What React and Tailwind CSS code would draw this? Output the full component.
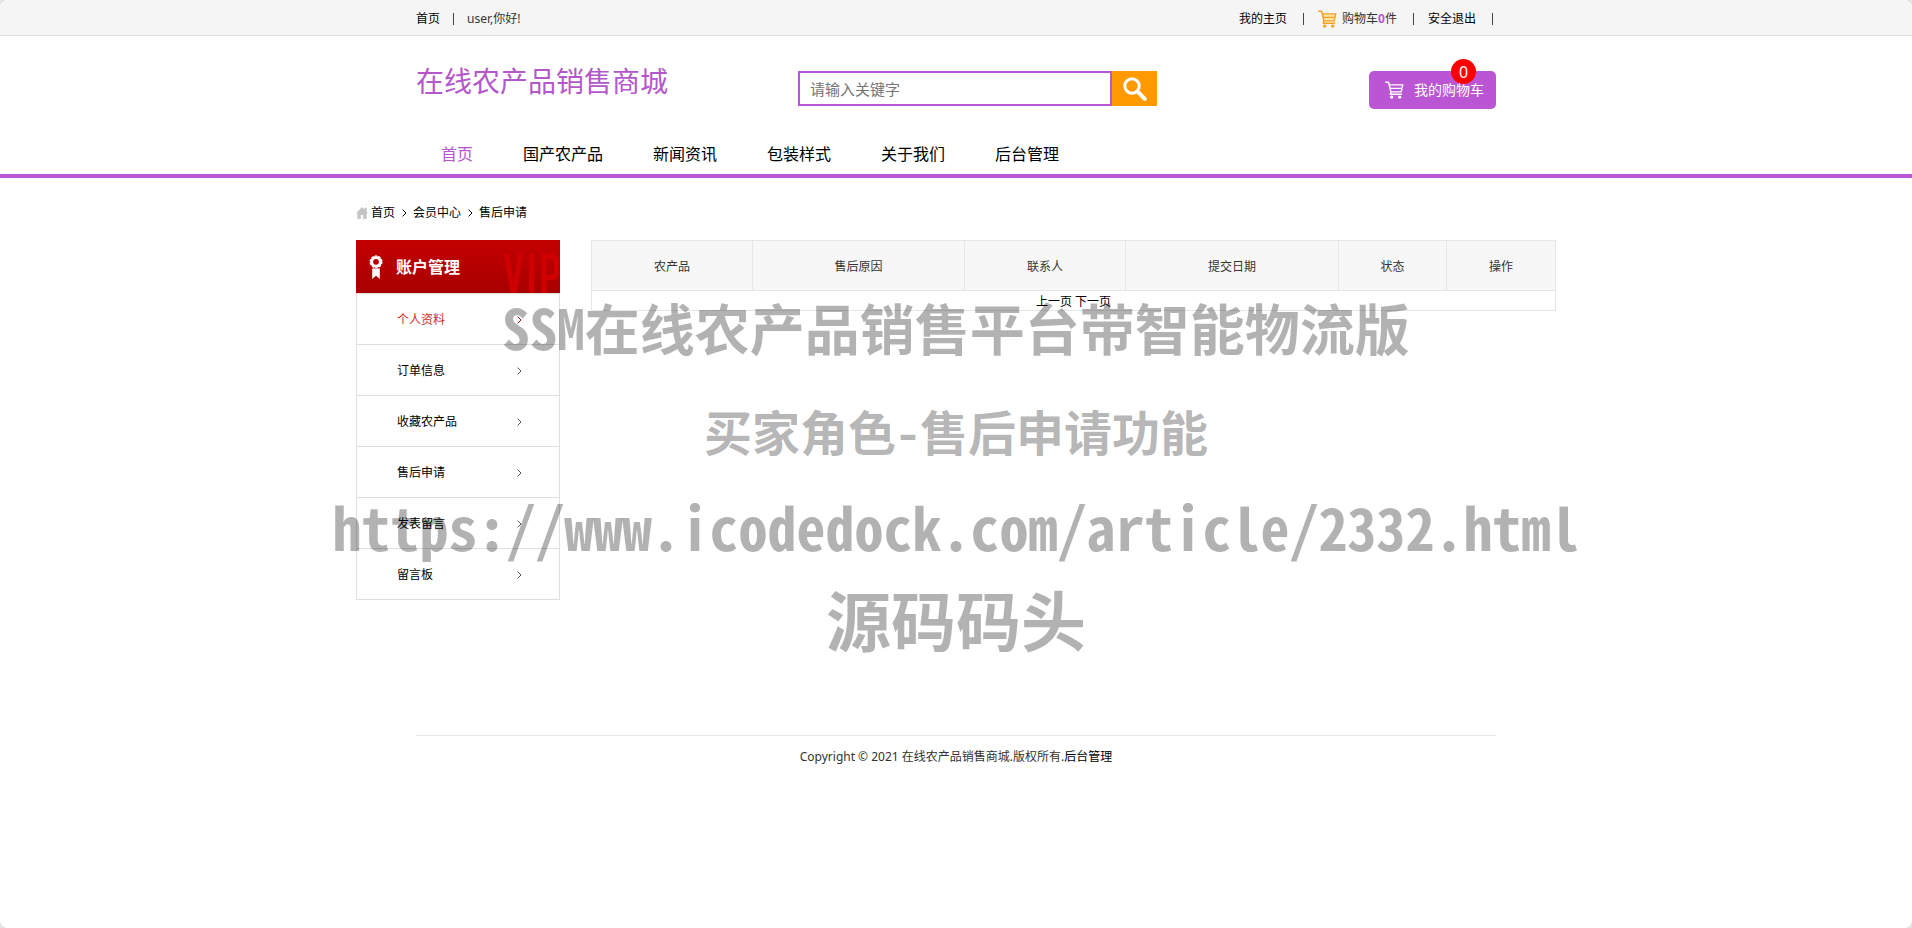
const navItems = ['首页', '国产农产品', '新闻资讯', '包装样式', '关于我们', '后台管理'];
const sideItems = ['个人资料', '订单信息', '收藏农产品', '售后申请', '发表留言', '留言板'];
const columns = [
  ['农产品', 'w-[161px]'],
  ['售后原因', 'w-[212px]'],
  ['联系人', 'w-[161px]'],
  ['提交日期', 'w-[213px]'],
  ['状态', 'w-[108px]'],
  ['操作', 'w-[109px]'],
];

function CartIcon({ className, shade = 'none' }) {
  return (
    <svg viewBox="0 0 20 19" fill="none" stroke="currentColor" className={className} aria-hidden="true">
      <path d="M4.5 4h14l-1.5 8H6.500z" fill={shade} stroke="none" />
      <path d="M.8 1.300h3L6.300 12l-.8 2h12" strokeWidth="1.500" strokeLinecap="round" strokeLinejoin="round" />
      <path d="M4.500 4h14.300L17 11.500H6.300M5.300 7.800H17.500" strokeWidth="1.400" strokeLinejoin="round" />
      <circle cx="7" cy="17" r="1.800" fill="currentColor" stroke="none" />
      <circle cx="15.500" cy="17" r="1.800" fill="currentColor" stroke="none" />
    </svg>
  );
}

function Chevron({ className }) {
  return (
    <svg viewBox="0 0 5 8" fill="none" stroke="currentColor" className={className} aria-hidden="true">
      <path d="M.6.6 4 4 .6 7.400" strokeWidth="1" />
    </svg>
  );
}

function HomeIcon() {
  return (
    <svg viewBox="0 0 12 12" fill="#c4c4c4" className="mr-[3px] size-3" aria-hidden="true">
      <path d="M6 0 0 6.200h1.400V12h3.400V8h2.400v4h3.400V6.200H12L10.800 5V.8H8.500v1.800z" />
    </svg>
  );
}

function MedalIcon() {
  return (
    <svg viewBox="0 0 14 24" fill="none" className="h-6 w-3.5" aria-hidden="true">
      <circle cx="7" cy="6.800" r="4.400" stroke="#fff" strokeWidth="3" />
      <circle cx="7" cy="6.800" r="5.900" stroke="#fff" strokeWidth="1.200" strokeDasharray="2.300 1.400" />
      <path d="M3.200 13.500h7.600V24L7 20.800 3.200 24z" fill="#fff" />
    </svg>
  );
}

function VipMark() {
  return (
    <svg viewBox="0 0 56 39" fill="none" stroke="#d00000" strokeWidth="5" className="absolute right-0 bottom-0 h-[39px] w-14" aria-hidden="true">
      <path d="M2.500 0 9 39M16.500 0 10 39M27.500 0v39M40 39V2.500h7.500q5 0 5 6v9q0 6-5 6H40" />
    </svg>
  );
}

function TopBar() {
  return (
    <div className="border-b border-[#dcdcdc] bg-[#f5f5f5]">
      <div className="mx-auto flex h-[35px] w-full max-w-[1080px] items-center justify-between pt-[3px]">
        <div className="flex items-center">
          <a href="#" className="text-black">首页</a>
          <span className="mx-[13px] h-3 w-px bg-[#444]" />
          <span>user,你好!</span>
        </div>
        <div className="flex items-center">
          <a href="#" className="text-black">我的主页</a>
          <span className="mx-4 mr-[14px] h-3 w-px bg-[#444]" />
          <a href="#" className="flex items-center gap-[5px]">
            <CartIcon className="h-[18px] w-[19px] text-[#f5a023]" shade="#fbe3a4" />
            <span>购物车<b className="text-[#ba55d3]">0</b>件</span>
          </a>
          <span className="ml-4 mr-[14px] h-3 w-px bg-[#444]" />
          <a href="#" className="text-black">安全退出</a>
          <span className="ml-4 mr-[3px] h-3 w-px bg-[#444]" />
        </div>
      </div>
    </div>
  );
}

function Header() {
  return (
    <header className="border-b-4 border-[#ba55d3]">
      <div className="mx-auto w-full max-w-[1080px]">
        <div className="flex items-start pt-[35px]">
          <h1 className="-mt-2.5 w-[382px] text-[28px] leading-10 text-[#b457cc]">在线农产品销售商城</h1>
          <form className="flex h-[35px]" onSubmit={(e) => e.preventDefault()}>
            <input
              type="text"
              aria-label="关键字"
              placeholder="请输入关键字"
              className="w-[314px] border-2 border-[#ba55d3] bg-white px-2.5 text-[15px] outline-none placeholder:text-[#757575]"
            />
            <button type="submit" aria-label="搜索" className="flex w-[45px] items-center justify-center bg-[#ff9900]">
              <svg viewBox="0 0 24 24" fill="none" stroke="#fff" className="size-6" aria-hidden="true">
                <circle cx="9" cy="9" r="7.200" strokeWidth="3" />
                <path d="m14.500 14.500 7.300 7.300" strokeWidth="4" strokeLinecap="round" />
              </svg>
            </button>
          </form>
          <a href="#" className="relative ml-auto flex h-[38px] w-[127px] items-center gap-2.5 rounded-[5px] bg-[#ba55d3] pl-4 text-sm text-white">
            <CartIcon className="h-[18px] w-[19px]" />
            我的购物车
            <span className="absolute -top-3 right-5 flex size-[25px] items-center justify-center rounded-full bg-[#ff0000] text-base">0</span>
          </a>
        </div>
        <nav className="flex h-[65px] items-end pb-1">
          {navItems.map((item, i) => (
            <a key={item} href="#" className={i === 0 ? 'px-[25px] text-base leading-8 text-[#b457cc]' : 'px-[25px] text-base leading-8 text-black'}>
              {item}
            </a>
          ))}
        </nav>
      </div>
    </header>
  );
}

function Sidebar() {
  return (
    <aside className="w-[204px] shrink-0">
      <h2 className="relative flex h-[53px] items-center gap-[13px] overflow-hidden bg-linear-to-b from-[#c40000] to-[#a80000] pl-[13px] text-base font-bold text-white">
        <VipMark />
        <MedalIcon />
        <span className="relative">账户管理</span>
      </h2>
      <ul className="border-x border-t border-[#dfdfdf]">
        {sideItems.map((item, i) => (
          <li key={item} className="border-b border-[#dfdfdf]">
            <a
              href="#"
              className={
                i === 0
                  ? 'flex h-[50px] items-center justify-between pt-0.5 pl-10 pr-[37px] text-[#d02b20]'
                  : 'flex h-[50px] items-center justify-between pt-0.5 pl-10 pr-[37px] text-black'
              }
            >
              {item}
              <Chevron className={i === 0 ? 'h-2 w-[5px] text-[#b01010]' : 'h-2 w-[5px] text-[#555]'} />
            </a>
          </li>
        ))}
      </ul>
    </aside>
  );
}

function RequestTable() {
  return (
    <table className="w-full table-fixed border-collapse border border-[#e6e6e6] text-center">
      <thead>
        <tr className="h-[50px] bg-[#f7f7f7]">
          {columns.map(([label, width]) => (
            <th key={label} scope="col" className={`${width} border border-[#e6e6e6] pt-0.5 font-normal`}>{label}</th>
          ))}
        </tr>
      </thead>
      <tbody>
        <tr className="h-5">
          <td colSpan={6} className="pt-0.5 leading-[17px] text-black">
            <a href="#">上一页</a> <a href="#">下一页</a>
          </td>
        </tr>
      </tbody>
    </table>
  );
}

function Watermark() {
  return (
    <div className="pointer-events-none absolute inset-x-0 top-[286px] flex flex-col items-center font-['Noto_Sans_CJK_SC',sans-serif] font-bold whitespace-nowrap text-black/30 [font-feature-settings:'hwid']">
      <p className="text-[55px] leading-[80px]">SSM在线农产品销售平台带智能物流版</p>
      <p className="mt-6 text-5xl leading-[80px]">买家角色-售后申请功能</p>
      <p className="mt-4 text-[58px] leading-[80px]">https://www.icodedock.com/article/2332.html</p>
      <p className="mt-3 text-[65px] leading-[80px]">源码码头</p>
    </div>
  );
}

export default function App() {
  return (
    <div className="bg-[#e4e4e4]">
      <div className="relative min-h-screen overflow-hidden rounded-lg bg-white font-['Noto_Sans','Noto_Sans_CJK_SC',sans-serif] text-xs text-[#333]">
        <TopBar />
        <Header />
        <main className="mx-auto w-full max-w-[1200px]">
          <nav aria-label="面包屑" className="flex h-[62px] items-center pt-2 text-black">
            <HomeIcon />
            <a href="#">首页</a>
            <Chevron className="ml-[7px] mr-1.5 h-2 w-[5px]" />
            <a href="#">会员中心</a>
            <Chevron className="ml-[7px] mr-1.5 h-2 w-[5px]" />
            <a href="#">售后申请</a>
          </nav>
          <div className="flex items-start gap-[31px]">
            <Sidebar />
            <RequestTable />
          </div>
        </main>
        <footer className="mx-auto mt-[135px] w-full max-w-[1080px] border-t border-[#e6e6e6] pt-[13px] text-center">
          Copyright © 2021 在线农产品销售商城.版权所有.<a href="#" className="text-black">后台管理</a>
        </footer>
        <Watermark />
      </div>
    </div>
  );
}
